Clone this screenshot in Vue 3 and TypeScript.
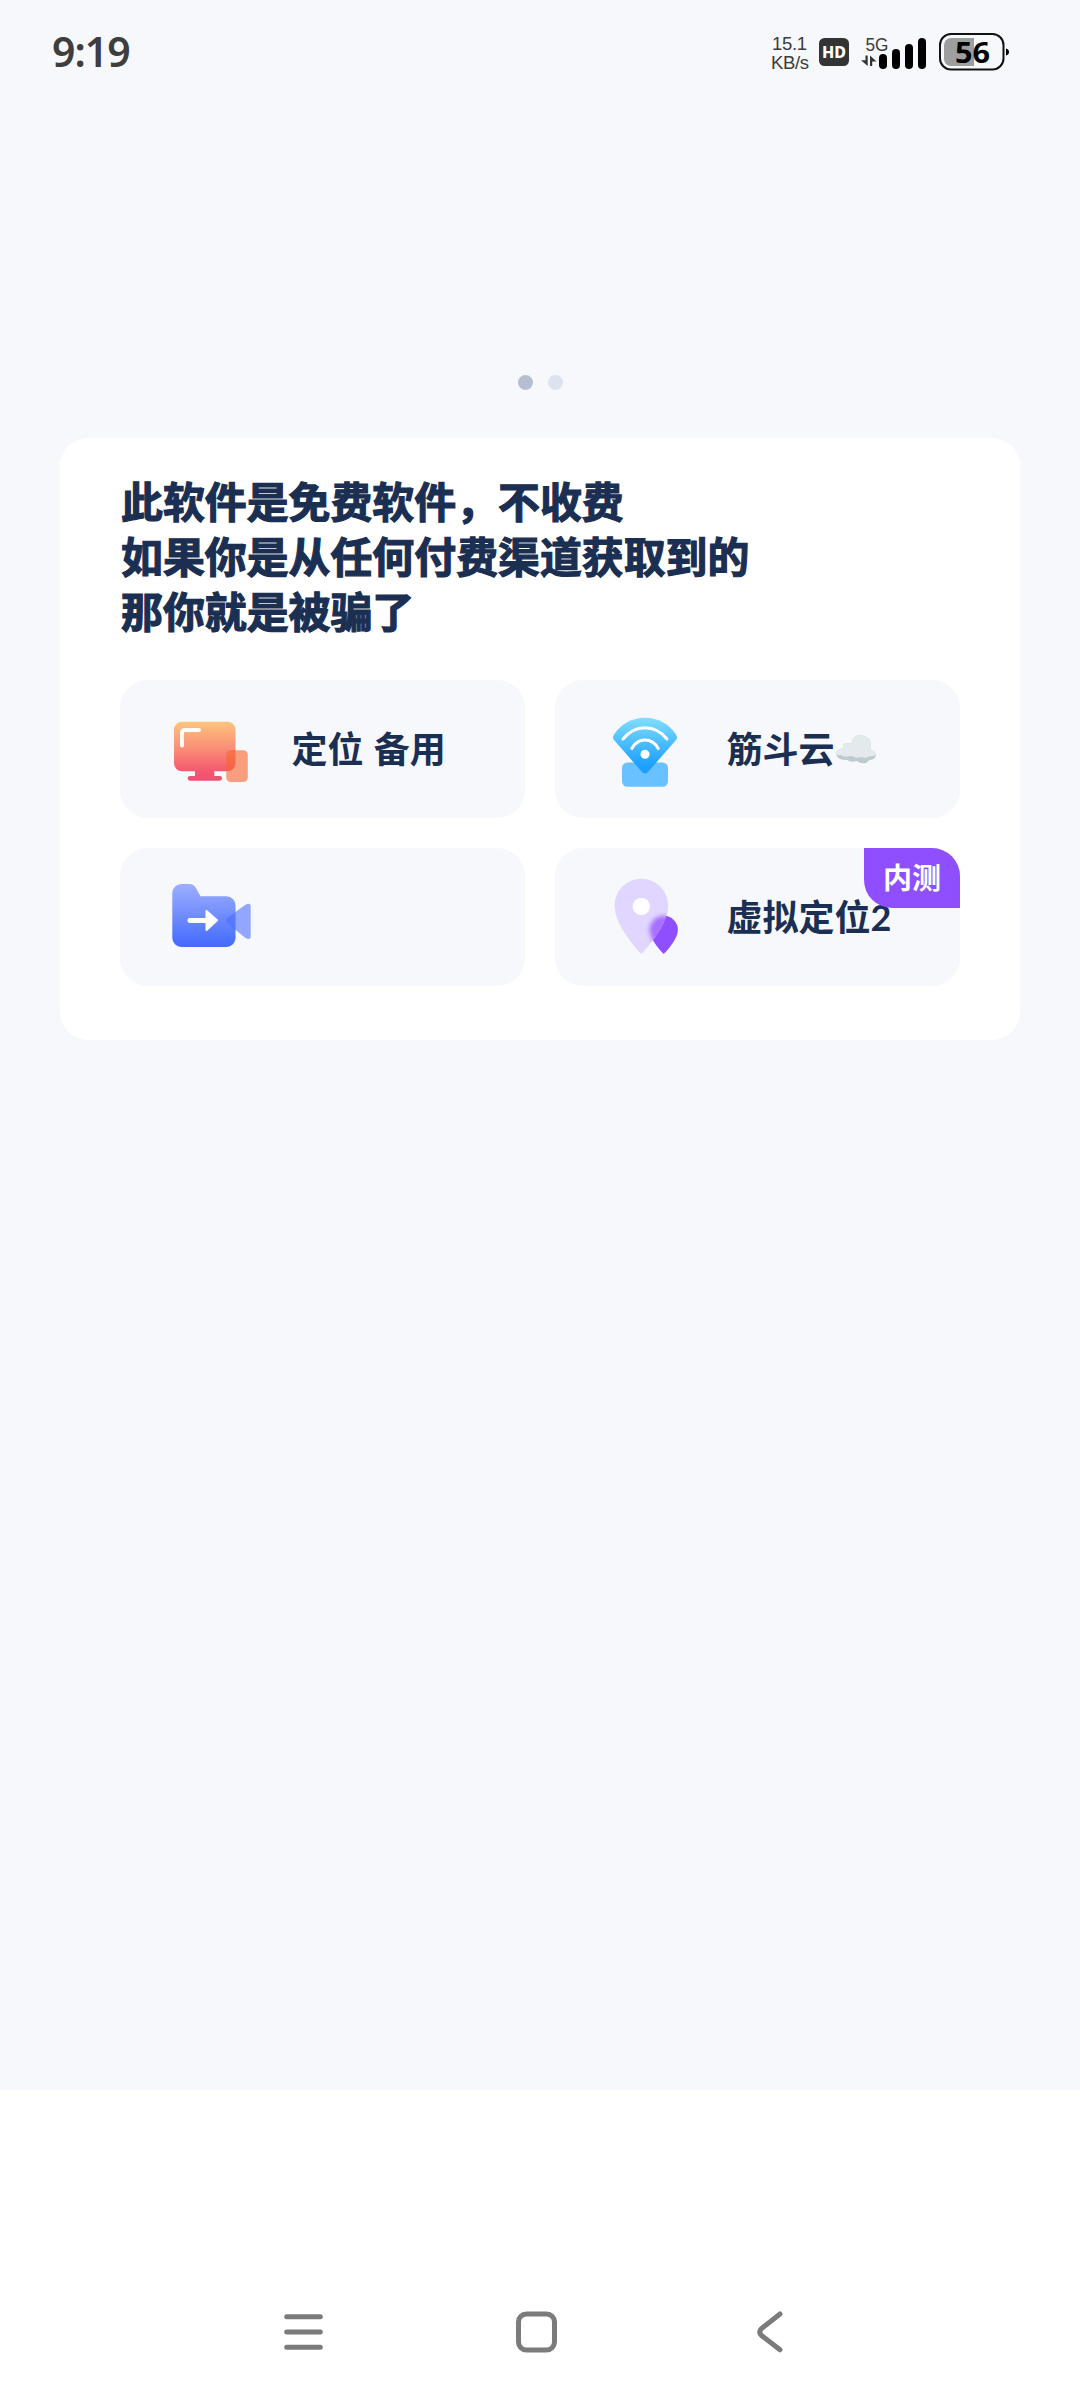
<script setup lang="ts">
interface Tile {
  icon: 'monitor' | 'wifi' | 'camera' | 'pin'
  label: string
  cloud?: boolean
  badge?: string
}

const notice: string[] = [
  '此软件是免费软件，不收费',
  '如果你是从任何付费渠道获取到的',
  '那你就是被骗了',
]

const tiles: Tile[] = [
  { icon: 'monitor', label: '定位 备用' },
  { icon: 'wifi', label: '筋斗云', cloud: true },
  { icon: 'camera', label: '' },
  { icon: 'pin', label: '虚拟定位2', badge: '内测' },
]

const bars = [
  { x: 18, y: 24, h: 15 },
  { x: 31, y: 19, h: 20 },
  { x: 44, y: 14, h: 25 },
  { x: 57, y: 8, h: 31 },
]
</script>

<template>
  <div class="screen">
    <header class="status">
      <span class="time">9:19</span>
      <div class="status-icons">
        <svg class="speed" width="40" height="46" viewBox="0 0 40 46">
          <text x="1" y="19.5" textLength="35">15.1</text>
          <text x="0" y="38.8" textLength="38">KB/s</text>
        </svg>
        <svg class="hd" width="30" height="46" viewBox="0 0 30 46">
          <rect y="8" width="30" height="28" rx="5.5" fill="#333534" />
          <text x="3" y="28" textLength="24" lengthAdjust="spacingAndGlyphs">HD</text>
        </svg>
        <svg class="signal" width="66" height="46" viewBox="0 0 66 46">
          <text x="4.5" y="20.5" textLength="23" lengthAdjust="spacingAndGlyphs">5G</text>
          <path d="M6.7 25.5V36L0 30.2H4.5V25.5ZM9 36V25.5L15.5 31.5H11.2V36Z" fill="#333" />
          <rect v-for="b in bars" :key="b.x" :x="b.x" :y="b.y" width="8" :height="b.h" rx="4" />
        </svg>
        <svg class="battery" width="71" height="46" viewBox="0 0 71 46">
          <rect x="1" y="4" width="63.5" height="35.5" rx="11" fill="none" stroke="#111" stroke-width="2" />
          <path d="M35 8V36H12A7 7 0 0 1 5 29V15A7 7 0 0 1 12 8Z" fill="#9d9e9f" />
          <path d="M67 18.5Q70 19.5 70 22T67 25.5Z" />
          <text x="16" y="32.7" textLength="35" lengthAdjust="spacingAndGlyphs">56</text>
        </svg>
      </div>
    </header>

    <main class="content">
      <div class="dots">
        <span class="dot active"></span>
        <span class="dot"></span>
      </div>

      <section class="card">
        <h1 class="notice">
          <span v-for="line in notice" :key="line">{{ line }}</span>
        </h1>
        <div class="grid">
          <div v-for="tile in tiles" :key="tile.icon" class="tile">
            <svg v-if="tile.icon === 'monitor'" class="icon" viewBox="160 699 100 100">
              <defs>
                <linearGradient id="warm" gradientUnits="userSpaceOnUse" x1="0" y1="721" x2="0" y2="781">
                  <stop offset="0" stop-color="#ffc57e" />
                  <stop offset="0.45" stop-color="#fa8f77" />
                  <stop offset="0.85" stop-color="#f5566f" />
                  <stop offset="1" stop-color="#ee5072" />
                </linearGradient>
              </defs>
              <rect x="174" y="721.7" width="61.5" height="49.6" rx="8" fill="url(#warm)" />
              <path d="M195 771H214.3V776H219.7A2.35 2.35 0 0 1 219.7 780.7H190A2.35 2.35 0 0 1 190 776H195Z" fill="url(#warm)" />
              <path d="M182 745.5V733Q182 730 185 730H199" fill="none" stroke="#fff" stroke-width="3.9" stroke-linecap="round" />
              <rect x="226.3" y="750.3" width="21.5" height="31.7" rx="4.5" fill="#f9652f" fill-opacity="0.62" />
            </svg>
            <svg v-else-if="tile.icon === 'wifi'" class="icon" viewBox="595 699 100 100">
              <defs>
                <linearGradient id="sky" gradientUnits="userSpaceOnUse" x1="0" y1="718" x2="0" y2="774">
                  <stop offset="0" stop-color="#80ddff" />
                  <stop offset="0.8" stop-color="#21a3ff" />
                  <stop offset="1" stop-color="#1a9cff" />
                </linearGradient>
              </defs>
              <rect x="622" y="762.5" width="46" height="24.3" rx="5.5" fill="#6ac1ff" />
              <path d="M642 772L614 740Q612 737.5 614 734.5C621 724 632 717.7 645 717.7S669 724 676 734.5Q678 737.5 676 740L648 772Q645 775.2 642 772Z" fill="url(#sky)" />
              <g fill="none" stroke="#fff" stroke-width="3" stroke-linecap="round">
                <path d="M623 739Q632 727.7 645 727.7T667 739" />
                <path d="M631.8 748.5Q636.5 740 645 740T658.2 748.5" />
              </g>
              <circle cx="645" cy="754.3" r="4.5" fill="#fff" />
            </svg>
            <svg v-else-if="tile.icon === 'camera'" class="icon" viewBox="160 867 100 100">
              <defs>
                <linearGradient id="indigo" gradientUnits="userSpaceOnUse" x1="0" y1="884" x2="0" y2="947">
                  <stop offset="0" stop-color="#9cafff" />
                  <stop offset="0.3" stop-color="#829aff" />
                  <stop offset="0.9" stop-color="#4b70ff" />
                  <stop offset="1" stop-color="#486bf5" />
                </linearGradient>
              </defs>
              <path d="M172.3 893A9 9 0 0 1 181.3 884H189.5Q193.8 884 196 888L200.5 896.3H226.5A9 9 0 0 1 235.5 905.3V938A9 9 0 0 1 226.5 947H181.3A9 9 0 0 1 172.3 938Z" fill="url(#indigo)" />
              <path d="M227 918L245.5 904.7Q250.7 902 250.7 907V936Q250.7 940.5 245.5 938L227 923Q224.5 920.5 227 918Z" fill="#4c6fff" fill-opacity="0.6" />
              <path d="M189.8 920.5H207" stroke="#fff" stroke-width="4.8" stroke-linecap="round" />
              <path d="M206.5 911L217 920.2L206.5 930Z" fill="#fff" stroke="#fff" stroke-width="2" stroke-linejoin="round" />
            </svg>
            <svg v-else class="icon" viewBox="595 867 100 100">
              <defs>
                <clipPath id="pin-clip">
                  <path d="M641.3 954C636 949 614.5 924 614.5 905.5A26.8 26.8 0 0 1 668.1 905.5C668.1 924 646.6 949 641.3 954Z" />
                </clipPath>
                <filter id="soft" x="-50%" y="-50%" width="200%" height="200%">
                  <feGaussianBlur stdDeviation="2.3" />
                </filter>
              </defs>
              <path d="M663.7 954C659 949.5 649.5 938 649.5 930A14.2 14.2 0 0 1 677.9 930C677.9 938 668.4 949.5 663.7 954Z" fill="#8f4fff" />
              <path d="M641.3 954C636 949 614.5 924 614.5 905.5A26.8 26.8 0 0 1 668.1 905.5C668.1 924 646.6 949 641.3 954Z" fill="#e1d6ff" />
              <g clip-path="url(#pin-clip)">
                <path d="M663.7 954C659 949.5 649.5 938 649.5 930A14.2 14.2 0 0 1 677.9 930C677.9 938 668.4 949.5 663.7 954Z" fill="#a970ff" filter="url(#soft)" />
              </g>
              <circle cx="641.3" cy="906.4" r="8.7" fill="#fff" />
            </svg>

            <span class="label">{{ tile.label }}</span>
            <svg v-if="tile.cloud" class="cloud" viewBox="0 0 40 29" role="img" aria-label="☁️">
              <path d="M0 19Q0 14 7 13.5Q6 8 12 8Q14 8 15 9Q17 0 25 0Q35 1 35 12Q35 14 34 15Q40 16 40 20Q39 25 33 25Q31 29 26 28Q23 28 21 26Q15 28 11 25Q1 25 0 19Z" fill="#bccbd0" />
              <path d="M0 19Q0 14 7 13.5Q6 8 12 8Q14 8 15 9Q17 0 25 0Q35 1 35 12Q35 14 34 15Q40 16 40 20Q37 22 34 21Q30 24 25 22Q20 24 16 21Q7 23 5 20Q1 21 0 19Z" fill="#e3e9ec" />
            </svg>
            <span v-if="tile.badge" class="badge">{{ tile.badge }}</span>
          </div>
        </div>
      </section>
    </main>

    <nav class="nav">
      <svg width="39" height="42" viewBox="0 0 39 42">
        <path d="M2.7 5.7H36.3M2.7 21H36.3M2.7 36.3H36.3" />
      </svg>
      <svg width="41" height="42" viewBox="0 0 41 42">
        <rect x="2.5" y="3" width="36" height="36" rx="8" />
      </svg>
      <svg width="26" height="42" viewBox="0 0 26 42">
        <path d="M23 3L4.5 17.5Q1 21 4.5 24.5L23 38.8" />
      </svg>
    </nav>
  </div>
</template>

<style>
body {
  margin: 0;
  background: #fff;
}
</style>

<style scoped>
.screen {
  width: 1080px;
  height: 2400px;
  display: flex;
  flex-direction: column;
  background: #fff;
  font-family: "Noto Sans CJK SC", "Noto Sans", sans-serif;
}
.status {
  height: 104px;
  box-sizing: border-box;
  padding: 0 70px 0 52px;
  display: flex;
  justify-content: space-between;
  align-items: center;
  background: #f7f8fc;
}
.time {
  margin-bottom: 2px;
  font: 600 41px/50px "Noto Sans", sans-serif;
  color: #3e3e3e;
  letter-spacing: -1px;
}
.status-icons {
  display: flex;
  height: 46px;
  margin-top: 2px;
}
.status-icons text {
  font-family: "Noto Sans", sans-serif;
}
.speed {
  margin-right: 8px;
}
.status-icons .speed text,
.status-icons .signal text {
  font-family: "Liberation Sans", sans-serif;
  font-size: 18.5px;
  fill: #3c3c3c;
}
.hd {
  margin-right: 12px;
}
.hd text {
  font-size: 16.5px;
  font-weight: 800;
  fill: #fff;
}
.signal {
  margin-right: 12px;
}
.battery text {
  font-size: 29px;
  font-weight: 700;
}
.content {
  height: 1986px;
  box-sizing: border-box;
  padding: 271px 60px 0;
  background: #f7f8fc;
}
.dots {
  display: flex;
  justify-content: center;
  gap: 15px;
  margin-bottom: 48px;
}
.dot {
  width: 15px;
  height: 15px;
  border-radius: 50%;
  background: #dde3ee;
}
.dot.active {
  background: #b6bfd2;
}
.card {
  height: 602px;
  box-sizing: border-box;
  padding: 34px 60px 54px;
  border-radius: 28px;
  background: #fff;
}
.notice {
  margin: 0 0 43px;
  padding-left: 1px;
  font-size: 41.9px;
  line-height: 55px;
  font-weight: 700;
  color: #1b2f52;
  -webkit-text-stroke: 1.2px #1b2f52;
  stroke-linejoin: round;
}
.notice span {
  display: block;
}
.grid {
  display: grid;
  grid-template-columns: 405px 405px;
  grid-auto-rows: 138px;
  gap: 30px;
}
.tile {
  position: relative;
  display: flex;
  align-items: center;
  padding-left: 40px;
  border-radius: 28px;
  background: #f7f8fc;
}
.icon {
  width: 100px;
  height: 100px;
  margin-right: 31.5px;
}
.label {
  padding-bottom: 1px;
  font-family: Lato, "Noto Sans CJK SC", sans-serif;
  font-size: 36px;
  line-height: 54px;
  font-weight: 700;
  word-spacing: 1.5px;
  color: #1b2f52;
}
.cloud {
  width: 40px;
  height: 29px;
  margin-left: 1px;
}
.badge {
  position: absolute;
  top: 0;
  right: 0;
  width: 96px;
  height: 60px;
  line-height: 56px;
  text-align: center;
  font-size: 29px;
  font-weight: 700;
  color: #fff;
  background: #8f4fff;
  border-radius: 0 28px 0 28px;
}
.nav {
  margin-top: 221px;
  padding: 0 297px 0 284px;
  display: flex;
  fill: none;
  stroke: #7b7b7b;
  stroke-width: 5;
  stroke-linecap: round;
}
.nav svg:nth-child(2) {
  margin: 0 200px 0 192.5px;
}
</style>
